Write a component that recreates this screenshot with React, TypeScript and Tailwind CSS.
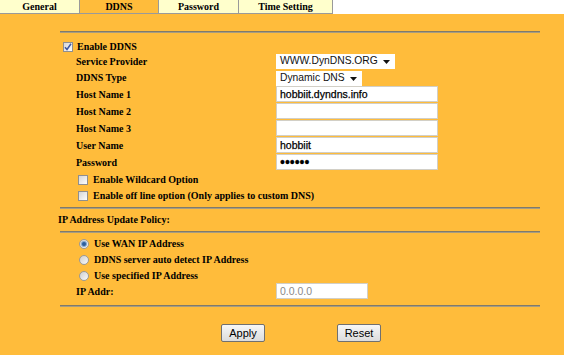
import React from 'react';

const tabs = [
  { label: 'General', cls: 'w-[80px] bg-[#ffffcc]' },
  { label: 'DDNS', cls: 'w-[79px] bg-[#ffbc3b]' },
  { label: 'Password', cls: 'w-[80px] bg-[#ffffcc]' },
  { label: 'Time Setting', cls: 'w-[94px] bg-[#ffffcc]' },
];

const Rule = () => (
  <div className="h-[2px] border-t border-[#7f7a6c] bg-[#a89c80]" />
);

const CheckBox = ({ checked }: { checked?: boolean }) => (
  <div className="w-[10px] h-[10px] border border-[#8f8f8f] bg-gradient-to-br from-[#d6d6d6] to-[#fdfdfd] flex items-center justify-center shrink-0">
    {checked && (
      <svg width="8" height="8" viewBox="0 0 8 8">
        <path d="M1 4.2 L3 6.5 L7 0.8" fill="none" stroke="#3e57a1" strokeWidth="1.5" />
      </svg>
    )}
  </div>
);

const Radio = ({ checked }: { checked?: boolean }) => (
  <div className="w-[10px] h-[10px] rounded-full border border-[#9a9a9a] bg-gradient-to-br from-[#cfcfcf] to-[#fafafa] flex items-center justify-center shrink-0">
    {checked && <div className="w-[4px] h-[4px] rounded-full bg-[#2f5f9a] ring-1 ring-[#7ea6d4]" />}
  </div>
);

const Select = ({ value, w }: { value: string; w: string }) => (
  <div className={`${w} h-[15px] bg-white flex items-center justify-between pl-[4px] pr-[5px] font-['Liberation_Sans',Arial,sans-serif] font-normal text-[10.3px] text-[#111]`}>
    <span>{value}</span>
    <svg width="7" height="4" viewBox="0 0 7 4">
      <path d="M0 0 H7 L3.5 4 Z" fill="#111" />
    </svg>
  </div>
);

const TextBox = ({ value, type = 'text', w = 'w-[162px]', gray }: { value: string; type?: string; w?: string; gray?: boolean }) => (
  <input
    readOnly
    type={type}
    value={value}
    className={`${w} h-[16px] bg-white border border-[#d2cfc6] px-[3px] outline-none font-['Liberation_Sans',Arial,sans-serif] ${type === 'password' ? 'text-[14px] leading-none' : 'text-[10.5px]'} ${gray ? 'text-[#8a8a8a] font-normal' : 'text-black font-normal [-webkit-text-stroke:0.25px_black]'}`}
  />
);

const Row = ({ label, h, children }: { label: string; h: string; children: React.ReactNode }) => (
  <div className={`flex ${h}`}>
    <div className="w-[216px] pl-[16px] flex items-center">{label}</div>
    <div className="flex items-start">{children}</div>
  </div>
);

export default function App() {
  return (
    <div className="w-[564px] h-[355px] overflow-hidden bg-[#ffbc3b] font-['Liberation_Serif','Times_New_Roman',serif] text-[10px] font-bold text-black leading-none">
      <div className="flex h-[14px] bg-white">
        {tabs.map((t) => (
          <div
            key={t.label}
            className={`${t.cls} border-r border-b border-[#9a9a9a] flex items-center justify-center`}
          >
            {t.label}
          </div>
        ))}
      </div>

      <div className="pl-[60px] pr-[24px] pt-[17px]">
        <Rule />

        <div className="flex items-center h-[14px] mt-[7px] pl-[3px] gap-[4px]">
          <CheckBox checked />
          <span>Enable DDNS</span>
        </div>

        <Row label="Service Provider" h="h-[16px]">
          <Select value="WWW.DynDNS.ORG" w="w-[119px]" />
        </Row>
        <Row label="DDNS Type" h="h-[16px]">
          <div className="pt-[1px]">
            <Select value="Dynamic DNS" w="w-[86px]" />
          </div>
        </Row>
        <Row label="Host Name 1" h="h-[17px]">
          <TextBox value="hobbiit.dyndns.info" />
        </Row>
        <Row label="Host Name 2" h="h-[17px]">
          <TextBox value="" />
        </Row>
        <Row label="Host Name 3" h="h-[17px]">
          <TextBox value="" />
        </Row>
        <Row label="User Name" h="h-[17px]">
          <TextBox value="hobbiit" />
        </Row>
        <Row label="Password" h="h-[17px]">
          <TextBox value="123456" type="password" />
        </Row>

        <div className="flex items-center h-[17px] pl-[18px] gap-[5px]">
          <CheckBox />
          <span>Enable Wildcard Option</span>
        </div>
        <div className="flex items-center h-[15px] pl-[18px] gap-[5px]">
          <CheckBox />
          <span>Enable off line option (Only applies to custom DNS)</span>
        </div>

        <div className="mt-[4px]">
          <Rule />
        </div>
        <div className="h-[22px] flex items-center -ml-[2px]">IP Address Update Policy:</div>
        <Rule />

        <div className="mt-[3px]">
          <div className="flex items-center h-[16px] pl-[19px] gap-[5px]">
            <Radio checked />
            <span>Use WAN IP Address</span>
          </div>
          <div className="flex items-center h-[16px] pl-[19px] gap-[5px]">
            <Radio />
            <span>DDNS server auto detect IP Address</span>
          </div>
          <div className="flex items-center h-[15px] pl-[19px] gap-[5px]">
            <Radio />
            <span>Use specified IP Address</span>
          </div>
        </div>
        <Row label="IP Addr:" h="h-[17px]">
          <TextBox value="0.0.0.0" w="w-[92px]" gray />
        </Row>

        <div className="mt-[5px]">
          <Rule />
        </div>

        <div className="flex mt-[17px] pl-[161px] gap-[72px]">
          <button className="w-[44px] h-[18px] border border-[#707070] rounded-[2px] bg-gradient-to-b from-[#f7f7f7] to-[#dcdcdc] font-['Liberation_Sans',Arial,sans-serif] font-normal text-[11px] text-black">
            Apply
          </button>
          <button className="w-[44px] h-[18px] border border-[#707070] rounded-[2px] bg-gradient-to-b from-[#f7f7f7] to-[#dcdcdc] font-['Liberation_Sans',Arial,sans-serif] font-normal text-[11px] text-black">
            Reset
          </button>
        </div>
      </div>
    </div>
  );
}
